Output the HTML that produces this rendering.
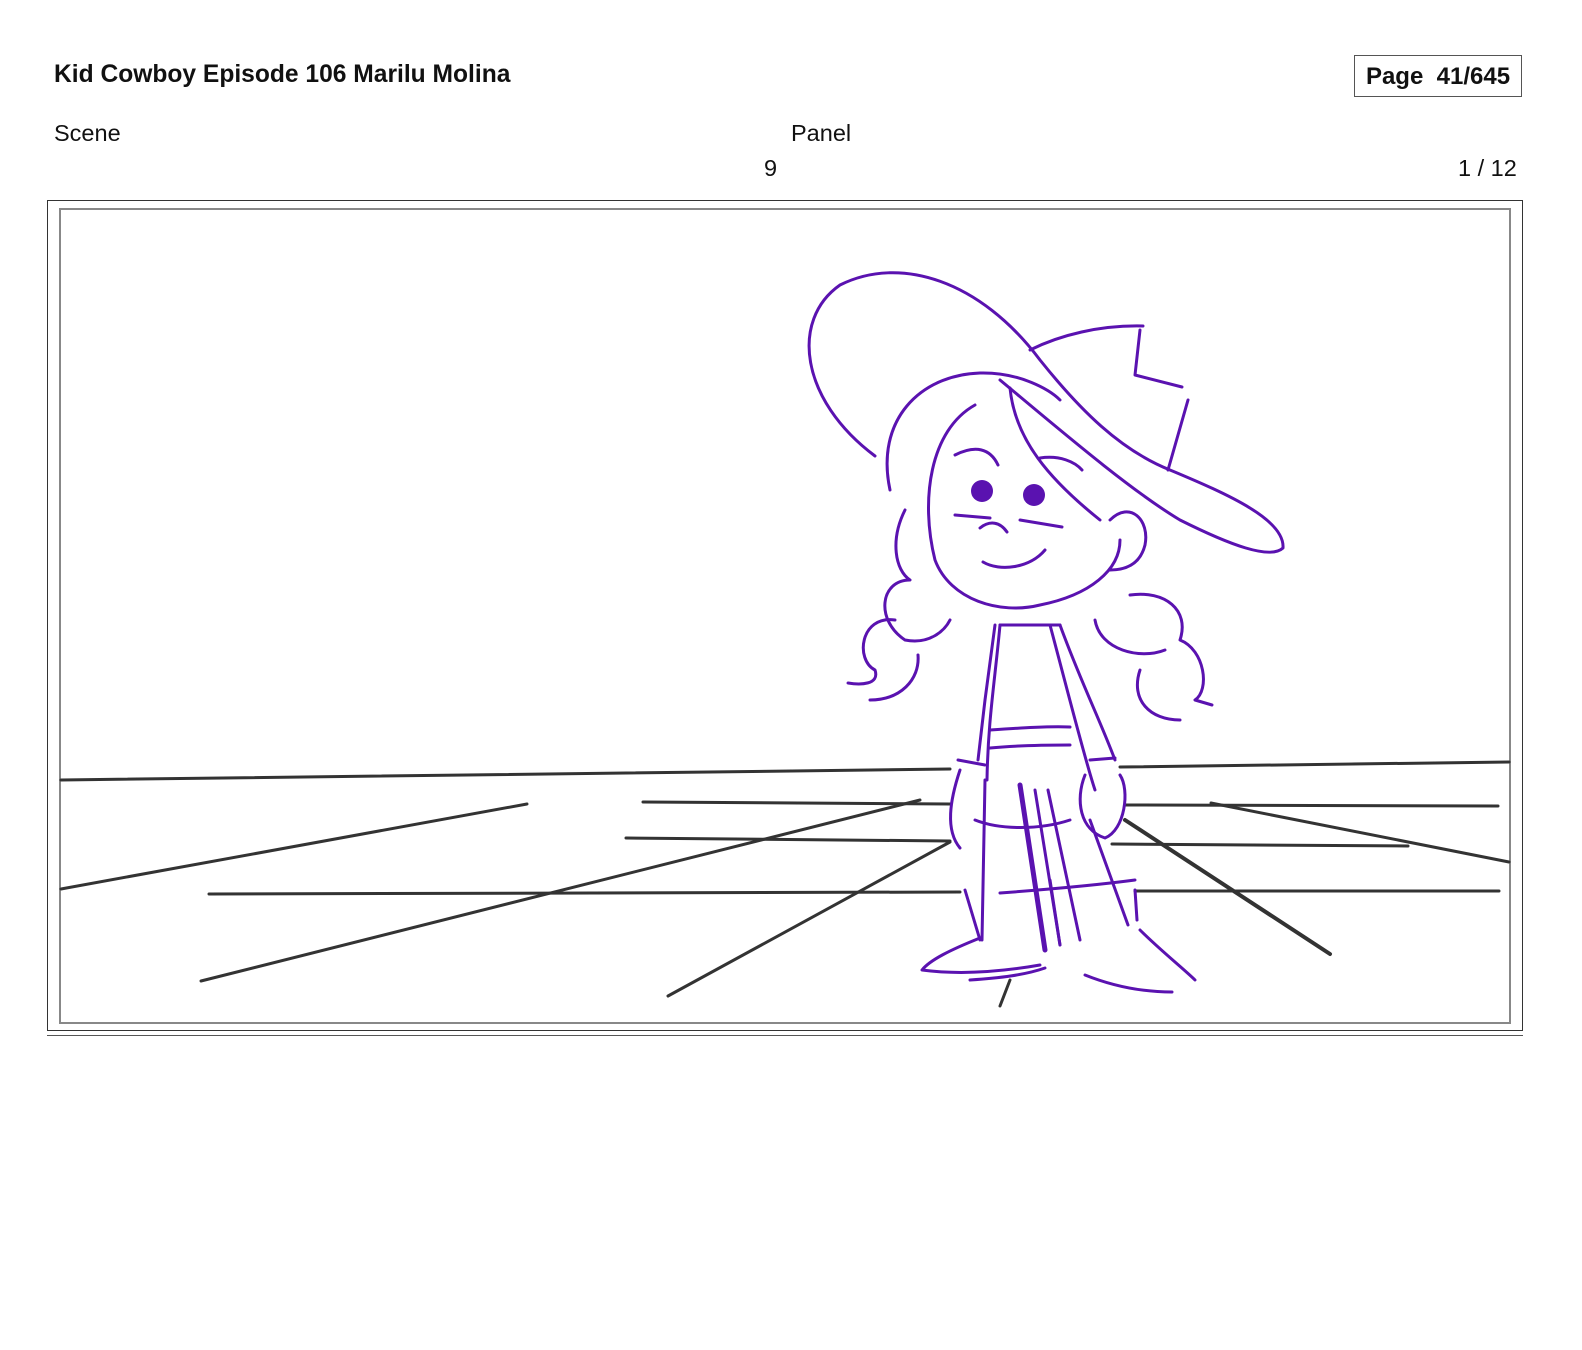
<!DOCTYPE html>
<html><head><meta charset="utf-8"><style>
html,body{margin:0;padding:0;background:#fff;width:1582px;height:1350px;overflow:hidden;font-family:"Liberation Sans",sans-serif;color:#111}
.t{position:absolute;white-space:nowrap}
</style></head><body>
<div class="t" style="left:54px;top:61px;font-size:24.6px;font-weight:bold">Kid Cowboy Episode 106 Marilu Molina</div>
<div class="t" style="left:1354px;top:55px;width:168px;height:42px;border:1px solid #555;box-sizing:border-box;font-size:24px;font-weight:bold;text-align:center;line-height:41px">Page&nbsp; 41/645</div>
<div class="t" style="left:54px;top:120px;font-size:23.5px">Scene</div>
<div class="t" style="left:791px;top:120px;font-size:23.5px">Panel</div>
<div class="t" style="left:764px;top:155px;font-size:23.5px">9</div>
<div class="t" style="left:1458px;top:155px;font-size:23.5px">1 / 12</div>
<div class="t" style="left:47px;top:200px;width:1476px;height:831px;border:1px solid #333;box-sizing:border-box"></div>
<div class="t" style="left:59px;top:208px;width:1452px;height:816px;border:2px solid #888;box-sizing:border-box"></div>
<div class="t" style="left:47px;top:1035px;width:1476px;height:1px;background:#555"></div>
<svg class="t" style="left:0;top:0" width="1582" height="1350" viewBox="0 0 1582 1350" fill="none" stroke-linecap="round" stroke-linejoin="round">
<g stroke="#333" stroke-width="3">
<path d="M61 780 L950 769"/><path d="M1120 767 L1509 762"/>
<path d="M61 889 L527 804"/>
<path d="M643 802 L950 804"/><path d="M1125 805 L1498 806"/>
<path d="M626 838 L950 841"/><path d="M1112 844 L1408 846"/>
<path d="M209 894 L960 892"/><path d="M1135 891 L1499 891"/>
<path d="M201 981 L920 800"/>
<path d="M668 996 L950 842"/>
<path d="M1211 803 L1509 862"/>
<path d="M1125 820 L1330 954" stroke-width="4"/>
<path d="M1010 980 L1000 1006"/>
</g>
<g stroke="#5a12b0" stroke-width="3">
<path d="M875 456 C800 400 790 320 840 285 C900 255 980 280 1040 360 C1080 410 1120 450 1170 470 C1230 495 1285 520 1283 548 C1270 560 1230 545 1180 520 C1130 490 1060 430 1000 380"/>
<path d="M1030 350 C1060 335 1100 325 1143 326"/><path d="M1140 330 L1135 375 L1182 387"/>
<path d="M1188 400 L1168 470"/>
<path d="M890 490 C875 420 920 375 980 373 C1020 372 1050 390 1060 400"/>
<path d="M1010 388 C1015 440 1050 480 1100 520"/>
<path d="M975 405 C930 430 920 500 935 560 C950 600 1000 615 1040 605 C1090 595 1120 570 1120 540"/>
<path d="M1110 520 C1130 500 1150 520 1145 545 C1140 565 1125 570 1110 570"/>
<path d="M955 455 C975 445 990 448 998 465"/><path d="M1040 458 C1060 455 1075 462 1082 470"/>
<path d="M983 562 C1000 572 1030 568 1045 550"/>
<path d="M955 515 L990 518"/><path d="M1020 520 L1062 527"/><path d="M980 528 C990 520 1000 522 1007 532"/>
<path d="M905 510 C890 540 895 570 910 580 C880 580 875 620 905 640 C930 645 945 630 950 620"/>
<path d="M895 620 C860 615 855 660 875 670 C880 685 860 685 848 683"/>
<path d="M918 655 C920 680 900 700 870 700"/>
<path d="M1130 595 C1165 590 1190 610 1180 640 C1205 650 1210 690 1195 700 L1212 705"/>
<path d="M1095 620 C1100 650 1140 660 1165 650"/><path d="M1140 670 C1130 700 1150 720 1180 720"/>
<path d="M995 625 L985 700 L978 760"/><path d="M1000 625 C995 680 988 720 987 780"/>
<path d="M1060 625 C1080 680 1100 720 1115 760"/><path d="M1050 625 C1070 700 1085 760 1095 790"/>
<path d="M1000 625 L1060 625"/>
<path d="M990 730 C1020 728 1050 726 1070 727"/><path d="M990 748 C1020 745 1050 745 1070 745"/>
<path d="M960 770 C950 800 945 830 960 848"/><path d="M958 760 L985 765"/><path d="M1090 760 L1115 758"/>
<path d="M1085 775 C1075 800 1080 830 1105 838 C1125 830 1130 790 1120 775"/>
<path d="M975 820 C1000 830 1040 830 1070 820"/>
<path d="M985 780 L982 940"/><path d="M1020 785 L1045 950" stroke-width="5"/><path d="M1035 790 L1060 945"/>
<path d="M1048 790 L1080 940"/><path d="M1090 820 L1128 925"/>
<path d="M965 890 L980 940"/><path d="M1050 880 L1060 945"/>
<path d="M1000 893 C1040 890 1090 886 1135 880"/><path d="M1135 890 L1137 920"/>
<path d="M980 938 C950 950 930 960 922 970 C960 975 1000 972 1040 965"/>
<path d="M970 980 C1000 978 1025 975 1045 968"/>
<path d="M1140 930 C1160 950 1185 970 1195 980"/><path d="M1085 975 C1110 985 1140 992 1172 992"/>
</g>
<g fill="#5a12b0"><ellipse cx="982" cy="491" rx="11" ry="11"/><ellipse cx="1034" cy="495" rx="11" ry="11"/></g>
</svg>
</body></html>
